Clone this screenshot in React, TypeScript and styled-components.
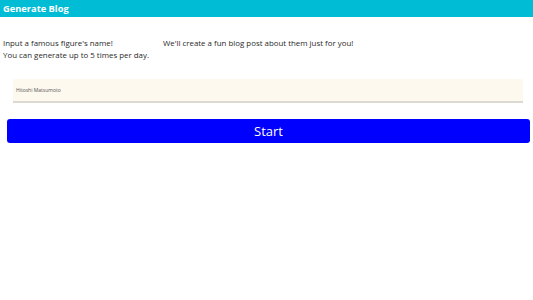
import React, { useState } from 'react'
import styled, { createGlobalStyle } from 'styled-components'

const GlobalStyle = createGlobalStyle`
  body {
    margin: 0;
    background: #ffffff;
    font-family: 'Open Sans', 'Noto Sans', sans-serif;
  }
`

const Header = styled.header`
  height: 17px;
  background-color: #00bcd4;
  color: #ffffff;
  display: flex;
  align-items: center;
  padding-left: 3px;
  font-size: 9.3px;
  font-weight: 700;
`

const Intro = styled.div`
  display: flex;
  padding: 20px 3px 0;
  font-size: 7.9px;
  line-height: 12px;
  color: #2a2a2a;
`

const IntroLeft = styled.div`
  width: 160px;
`

const Field = styled.div`
  margin: 14px 10px 0 13px;
`

const NameInput = styled.input`
  box-sizing: border-box;
  width: 100%;
  height: 24px;
  border: none;
  border-bottom: 2px solid #dcdad2;
  border-radius: 2px 2px 0 0;
  background-color: #fdf9ee;
  padding: 0 3px;
  font-family: 'Open Sans', sans-serif;
  font-size: 5px;
  color: #333333;
  outline: none;

  &::placeholder {
    color: #555555;
  }
`

const StartButton = styled.button`
  display: block;
  box-sizing: border-box;
  margin: 16px 3px 0 7px;
  width: calc(100% - 10px);
  height: 24px;
  border: none;
  border-radius: 3px;
  background-color: #0000ff;
  color: #ffffff;
  font-family: 'Open Sans', sans-serif;
  font-size: 13px;
  cursor: pointer;
`

const App: React.FC = () => {
  const [name, setName] = useState('')

  return (
    <>
      <GlobalStyle />
      <Header>Generate Blog</Header>
      <Intro>
        <IntroLeft>
          Input a famous figure&apos;s name!
          <br />
          You can generate up to 5 times per day.
        </IntroLeft>
        <div>We&apos;ll create a fun blog post about them just for you!</div>
      </Intro>
      <Field>
        <NameInput
          type="text"
          placeholder="Hitoshi Matsumoto"
          value={name}
          onChange={(e) => setName(e.currentTarget.value)}
        />
      </Field>
      <StartButton type="button">Start</StartButton>
    </>
  )
}

export default App
